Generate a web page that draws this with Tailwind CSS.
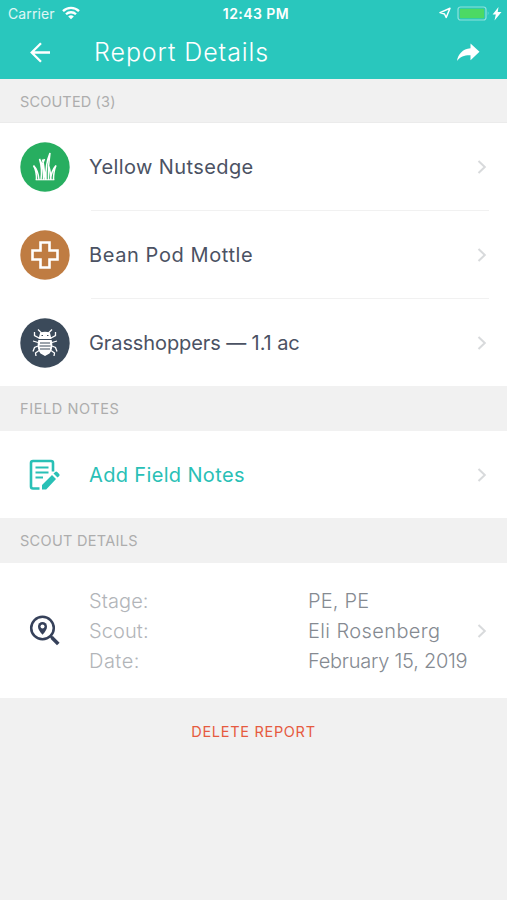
<!DOCTYPE html>
<html lang="en">
<head>
<meta charset="utf-8">
<title>Report Details</title>
<script src="https://cdn.jsdelivr.net/npm/@tailwindcss/browser@4"></script>
</head>
<body class="w-[507px] h-[900px] overflow-hidden bg-[#f1f1f1] font-['Inter','Open_Sans',sans-serif] text-[#4b5263] whitespace-nowrap">
<svg class="hidden"><symbol id="chev" viewBox="0 0 12 16"><path d="M1.500 2 7.800 8 1.500 14" fill="none" stroke="#d8dadc" stroke-width="2"/></symbol></svg>
<header class="h-[79px] bg-[#29c7bd] text-white">
  <div class="h-[26px] grid grid-cols-3 items-center pl-2 pr-1">
    <div class="flex items-center gap-[7px] text-[14px] text-white/85">
      <span class="tracking-[0.1px]">Carrier</span>
      <svg class="w-[18px] h-[14px]" viewBox="0 0 18 14" fill="none" stroke="#fff" stroke-width="2.3"><path d="M1 5.1a11.3 11.3 0 0 1 16 0M4 8.3a7.1 7.1 0 0 1 10 0"/><path d="M9 13.2 6.2 10.5a4 4 0 0 1 5.6 0Z" fill="#fff" stroke="none"/></svg>
    </div>
    <div class="text-center text-[14px] font-semibold tracking-[0.45px] pl-[1px]">12:43 PM</div>
    <div class="flex items-center justify-end">
      <svg class="w-3 h-3 mr-[6px]" viewBox="0 0 12 12"><path d="M11 1.200 7.200 10.500 5.500 7 1 5.600Z" fill="none" stroke="#fff" stroke-width="1.5" stroke-linejoin="round"/></svg>
      <svg class="w-[46px] h-[15px]" viewBox="0 0 46 15"><rect x="1" y="1" width="28" height="13" rx="2.5" fill="none" stroke="#8ee2dc" stroke-width="1.2"/><rect x="2.8" y="2.8" width="24.4" height="9.4" rx="1" fill="#4cd964"/><path d="M30.8 5.3q1.8 2.2 0 4.4z" fill="#8ee2dc"/><path d="M41.500 1 35.600 8.600h3.200L37.500 14.500l7-8.500h-3.800z" fill="#fff"/></svg>
    </div>
  </div>
  <div class="h-[53px] flex items-center pl-[29px] pr-[27px]">
    <svg class="w-[22px] h-[22px]" viewBox="0 0 22 22" fill="none" stroke="#fff" stroke-width="2.3"><path d="M21 10.500H3M12 1.300 2.700 10.500 12 19.700"/></svg>
    <h1 class="ml-[43px] text-[25px] font-light tracking-[0.93px]">Report Details</h1>
    <svg class="ml-auto w-6 h-[20px] mb-px" viewBox="0 0 24 20"><path d="M14.500 1.500 23.500 9.800l-9 8.400v-5C8.500 13 4.500 14.500 1 19 2 12.500 6.500 7 14.500 6.300Z" fill="#fff"/></svg>
  </div>
</header>
<main>
  <h2 class="h-[44px] pl-[20px] pt-[2px] flex items-center text-[14.5px] text-[#adadad] tracking-[0.15px] border-b border-[#ebebeb]"><span>SCOUTED (3)</span></h2>
  <section class="h-[263px] bg-white">
    <div class="h-[88px] flex items-center pl-5 pr-[18px]">
      <svg class="w-[50px] h-[50px]" viewBox="0 0 50 50"><circle cx="25" cy="25" r="24.700" fill="#27ae60"/><g fill="none" stroke="#fff" stroke-width="1.500"><path d="M16.500 38c.2-6-.3-10-3-14.500 3.500 3.500 5 8 5.500 14.500M21 38c1-8 .8-14-1.500-21 3.500 6 4.500 12 4 21M25.500 38c-1.500-9-1.500-15-3-20.500M26 38c-.5-11 .5-19 4-27-1.500 9-2 17-1.500 27M24.500 17l-2 5M31 38c-.5-6-.5-10-2.500-14.500M30.500 38c.5-6 2-10.500 5.500-14.500-2 4.500-2.500 9-2.500 14.500"/><path d="M15.700 37.800H34.300" stroke-width="1"/></g></svg>
      <span class="ml-[19px] text-[20px] tracking-[0.4px]">Yellow Nutsedge</span>
      <svg class="ml-auto w-3 h-4"><use href="#chev"/></svg>
    </div>
    <div class="h-[88px] flex items-center pl-5 pr-[18px] relative">
      <div class="absolute top-[-1px] left-[91px] right-[18px] h-px bg-[#f1f1f1]"></div>
      <svg class="w-[50px] h-[50px]" viewBox="0 0 50 50"><circle cx="25" cy="25" r="24.700" fill="#bf7c42"/><path d="M20.500 12.500h9v8h8v9h-8v8h-9v-8h-8v-9h8z" fill="none" stroke="#fff" stroke-width="2.600"/></svg>
      <span class="ml-[19px] text-[20px] tracking-[0.6px]">Bean Pod Mottle</span>
      <svg class="ml-auto w-3 h-4"><use href="#chev"/></svg>
    </div>
    <div class="h-[88px] flex items-center pl-5 pr-[18px] relative">
      <div class="absolute top-[-1px] left-[91px] right-[18px] h-px bg-[#f1f1f1]"></div>
      <svg class="w-[50px] h-[50px]" viewBox="0 0 50 50"><circle cx="25" cy="25" r="24.700" fill="#3b4a5a"/><g fill="none" stroke="#fff" stroke-width="1.300"><path d="M22 15.500 18 11.500M28 15.500l4-4M19 20l-4.500-2.500V14M31 20l4.500-2.500V14M18 24.500l-5-1.500M32 24.500l5-1.500M18 28l-3.500 1.500-1.500 4M32 28l3.500 1.500 1.500 4M19 32.500 15.500 35l.5 3M31 32.500l3.500 2.500-.5 3"/></g><path d="M20 15q5-2.500 10 0l1.500 6h-13zM18.300 22h13.400q2 8.500-2.200 13.500L25 38l-4.500-2.500Q16.300 30.500 18.300 22Z" fill="#fff"/><path d="M20 25h10M19.500 28h11M20 31h10" stroke="#3b4a5a" stroke-width="1.200"/><path d="M21.500 17.500h1.500m4 0h1.500" stroke="#3b4a5a"/></svg>
      <span class="ml-[19px] text-[20px] tracking-[-0.1px]">Grasshoppers — 1.1 ac</span>
      <svg class="ml-auto w-3 h-4"><use href="#chev"/></svg>
    </div>
  </section>
  <h2 class="h-[45px] pl-[20px] pt-px flex items-center text-[14.5px] text-[#adadad] tracking-[0.6px]"><span>FIELD NOTES</span></h2>
  <section class="h-[87px] bg-white flex items-center pl-[29px] pr-[18px] text-[#29c0b6]">
    <svg class="w-8 h-8" viewBox="0 0 32 32" fill="none" stroke="#29c0b6" stroke-width="2.600"><path d="M10.500 29.500H4Q2 29.500 2 27.500V4Q2 2 4 2H22Q24 2 24 4V12.500"/><path d="M6.500 8.500h13M6.500 13.500h13M6.500 18.500h7.500" stroke-width="2.200"/><path d="M13 30.500v-4.500L23 16l4 4L17.200 30.500zM24.500 14.600l1.700-1.700q1-.9 2 0l2 2q.9 1 0 2L28.500 18.600z" fill="#29c0b6" stroke="none"/></svg>
    <span class="ml-[28px] text-[20px] tracking-[0.35px]">Add Field Notes</span>
    <svg class="ml-auto w-3 h-4"><use href="#chev"/></svg>
  </section>
  <h2 class="h-[45px] pl-[20px] pt-px flex items-center text-[14.5px] text-[#adadad] tracking-[0.3px]"><span>SCOUT DETAILS</span></h2>
  <section class="h-[135px] bg-white flex items-center pl-[29px] pr-[18px]">
    <svg class="w-8 h-8" viewBox="0 0 32 32" fill="none" stroke="#36415a"><circle cx="13.500" cy="13" r="11.300" stroke-width="2.500"/><path d="m21.500 21 2 2" stroke-width="2.500"/><path d="m22.800 22.500 6.500 6.500" stroke-width="3.600"/><path d="M13.500 19.800C10.500 16.500 9 14 9 11.500a4.500 4.500 0 0 1 9 0c0 2.500-1.500 5-4.500 8.300Z" fill="#36415a" stroke="none"/><circle cx="13.500" cy="11.500" r="2" fill="#fff" stroke="none"/></svg>
    <div class="ml-[28px] grid grid-cols-[219px_auto] leading-[30px] text-[20px] font-light text-[#858a91]">
      <span class="text-[#b2b5b9] tracking-[0.1px]">Stage:</span><span class="tracking-[0.2px]">PE, PE</span>
      <span class="text-[#b2b5b9] tracking-[0.1px]">Scout:</span><span class="tracking-[0.4px]">Eli Rosenberg</span>
      <span class="text-[#b2b5b9] tracking-[0.5px]">Date:</span><span class="tracking-[-0.26px]">February 15, 2019</span>
    </div>
    <svg class="ml-auto w-3 h-4"><use href="#chev"/></svg>
  </section>
  <div class="h-[66px] pt-px flex items-center justify-center text-[14.5px] text-[#e65a40] tracking-[0.7px]"><span>DELETE REPORT</span></div>
</main>
</body>
</html>
